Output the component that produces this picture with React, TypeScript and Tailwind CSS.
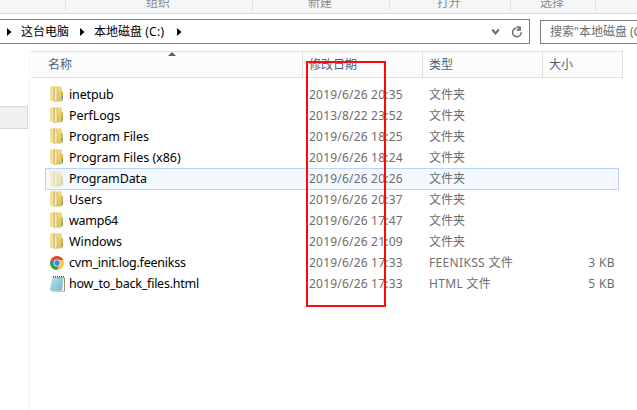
import React from "react";

type Entry = {
  name: string;
  date: string;
  type: string;
  size?: string;
  icon: "folder" | "chrome" | "note";
  active?: boolean;
  tracking: string;
};

const entries: Entry[] = [
  { name: "inetpub", date: "2019/6/26 20:35", type: "文件夹", icon: "folder", tracking: "tracking-[-0.15px]" },
  { name: "PerfLogs", date: "2013/8/22 23:52", type: "文件夹", icon: "folder", tracking: "tracking-[-0.1px]" },
  { name: "Program Files", date: "2019/6/26 18:25", type: "文件夹", icon: "folder", tracking: "tracking-[-0.05px]" },
  { name: "Program Files (x86)", date: "2019/6/26 18:24", type: "文件夹", icon: "folder", tracking: "tracking-[-0.03px]" },
  { name: "ProgramData", date: "2019/6/26 20:26", type: "文件夹", icon: "folder", active: true, tracking: "tracking-[-0.1px]" },
  { name: "Users", date: "2019/6/26 20:37", type: "文件夹", icon: "folder", tracking: "tracking-[-0.05px]" },
  { name: "wamp64", date: "2019/6/26 17:47", type: "文件夹", icon: "folder", tracking: "tracking-[-0.25px]" },
  { name: "Windows", date: "2019/6/26 21:09", type: "文件夹", icon: "folder", tracking: "tracking-[-0.05px]" },
  { name: "cvm_init.log.feenikss", date: "2019/6/26 17:33", type: "FEENIKSS 文件", size: "3 KB", icon: "chrome", tracking: "tracking-[-0.22px]" },
  { name: "how_to_back_files.html", date: "2019/6/26 17:33", type: "HTML 文件", size: "5 KB", icon: "note", tracking: "tracking-[-0.24px]" },
];

function FolderIcon({ faded }: { faded?: boolean }) {
  return (
    <svg width="16" height="18" viewBox="0 0 16 18" className={faded ? "mb-px opacity-45" : "mb-px"}>
      <defs>
        <linearGradient id="folderFront" x1="0" x2="1">
          <stop offset="0" stopColor="#f3e4a0" />
          <stop offset="0.5" stopColor="#eedd92" />
          <stop offset="1" stopColor="#d9bd5c" />
        </linearGradient>
        <linearGradient id="folderBack" x1="0" x2="0.4" y1="0" y2="1">
          <stop offset="0" stopColor="#f5e492" />
          <stop offset="1" stopColor="#e2c252" />
        </linearGradient>
      </defs>
      <path d="M6.500 1.200H12l.8 .8v13.800l-1 .7H6.500z" fill="url(#folderBack)" />
      <path d="M12 6l2 .6v8.600l-2 .9z" fill="#d9b640" />
      <path d="M13 11h1v3.500h-1z" fill="#5b9fb0" />
      <path d="M1 1.500L6 1v15.500L1 15.500z" fill="url(#folderFront)" />
      <path d="M5 3.200L8.300 2v13.600L5.500 17z" fill="#c5a551" />
      <path d="M5.800 3.400l1.900-.8v12.600l-1.900 1z" fill="#f7f0cf" />
    </svg>
  );
}

function ChromeIcon() {
  return (
    <svg width="16" height="18" viewBox="0 0 16 18">
      <circle cx="8" cy="9" r="7" fill="#fcc934" />
      <path d="M8 9L1.940 5.500A7 7 0 0 0 7.600 16L10.900 10.700z" fill="#27a15b" />
      <path d="M1.940 5.500A7 7 0 0 1 14.060 5.500L14.300 6H8L5 10.600z" fill="#dc4a3d" />
      <circle cx="8" cy="9" r="3.500" fill="#f4f6fa" />
      <circle cx="8" cy="9" r="2.700" fill="#3f82ee" />
    </svg>
  );
}

function NoteIcon() {
  return (
    <svg width="16" height="18" viewBox="0 0 16 18">
      <defs>
        <linearGradient id="notePaper" x1="0" x2="1" y1="0" y2="1">
          <stop offset="0" stopColor="#c3e5ee" />
          <stop offset="1" stopColor="#5caec2" />
        </linearGradient>
      </defs>
      <path d="M4 2.500h12v14H3z" fill="#a58e67" />
      <path d="M4 2.500h11v13.300H3z" fill="#fff" />
      <path d="M3.200 2h11.300l-1.500 13.500H.8z" fill="url(#notePaper)" />
      <path d="M3 5.500h10.500M2.800 7.500h10.500M2.500 9.500H13M2.200 11.500h10.500M2 13.500h10.500" stroke="#a5dae6" strokeWidth=".5" />
      <path d="M4 1.700h11" stroke="#444c50" strokeWidth="1.500" strokeDasharray="1 1" />
    </svg>
  );
}

const icons = { chrome: <ChromeIcon />, note: <NoteIcon /> };

function Crumb() {
  return (
    <svg width="5" height="8" viewBox="0 0 5 8" className="shrink-0">
      <path d="M0 0l4.500 4L0 8z" fill="#000" />
    </svg>
  );
}

const ribbon = [
  { label: "", box: "w-[66px]" },
  { label: "组织", box: "w-[187px] pl-[80px]" },
  { label: "新建", box: "w-[137px] pl-[55px]" },
  { label: "打开", box: "w-[121px] pl-[47px]" },
  { label: "选择", box: "w-[85px] pl-[29px]" },
];

export default function App() {
  return (
    <div className="flex h-[410px] w-[637px] flex-col overflow-hidden bg-white font-['Noto_Sans','Noto_Sans_CJK_SC',sans-serif] text-[12px] text-black">
      <div className="flex h-[14px] shrink-0 border-b border-[#d9dadb] bg-[#f5f6f7]">
        {ribbon.map((g) => (
          <div key={g.box} className={`flex h-[10px] shrink-0 border-r border-[#dfe0e1] text-[#8c8c8c] ${g.box}`}>
            <span className="-mt-[5px] h-[16px] leading-[16px]">{g.label}</span>
          </div>
        ))}
      </div>

      <div className="flex h-[37px] shrink-0 pt-[5px]">
        <div className="flex h-[25px] w-[530px] shrink-0 items-center border border-l-0 border-[#7c7c7c] pl-[7px]">
          <Crumb />
          <span className="ml-[9px] w-[59px]">这台电脑</span>
          <Crumb />
          <span className="ml-[9px] w-[83px] whitespace-nowrap">
            本地磁盘 <span className="tracking-[0.3px]">(C:)</span>
          </span>
          <Crumb />
          <svg width="9" height="8" viewBox="0 0 9 8" className="ml-[309px] shrink-0">
            <path d="M1.200 1.500L4.500 5.500 7.800 1.500" fill="none" stroke="#6c6c6c" strokeWidth="2" />
          </svg>
          <svg width="12" height="12" viewBox="0 0 12 12" className="ml-[11px] shrink-0">
            <path d="M5.500 2.100A4.300 4.300 0 1 0 10.200 6.300" fill="none" stroke="#757575" strokeWidth="1.600" />
            <path d="M5.200 0h1.500L10 .7v4H5.800V3.300L7.500 3z" fill="#757575" />
          </svg>
        </div>
        <div className="ml-[10px] mt-px flex h-[24px] w-[120px] shrink-0 items-center whitespace-nowrap border border-[#7c7c7c] pl-[9px] text-[#6d6d6d]">
          搜索"本地磁盘 (C:)"
        </div>
      </div>

      <div className="flex flex-1">
        <div className="w-[30px] shrink-0 border-r border-[#f3f4f5] pt-[55px]">
          <div className="h-[23px] w-[28px] border border-l-0 border-[#d9d9d9] bg-[#f0f0f0]" />
        </div>
        <div className="ml-px flex w-[592px] shrink-0 flex-col">
          <div className="relative flex h-[27px] shrink-0 items-center border-y border-r border-[#e0e0e0] bg-[#fcfcfc] text-[#4c607a]">
            <div className="flex h-full w-[272px] items-center border-r border-[#e0e0e0] pl-[17px]">名称</div>
            <div className="flex h-full w-[120px] items-center border-r border-[#e0e0e0] pl-[6px]">修改日期</div>
            <div className="flex h-full w-[120px] items-center border-r border-[#e0e0e0] pl-[6px]">类型</div>
            <div className="flex h-full items-center pl-[6px]">大小</div>
            <svg width="8" height="4" viewBox="0 0 8 4" className="absolute left-[137px] top-0">
              <path d="M4 0l4 4H0z" fill="#4c607a" />
            </svg>
          </div>
          <div className="ml-[14px] mt-[6px] flex w-[574px] flex-col">
            {entries.map((e) => (
              <div
                key={e.name}
                className={`flex items-center whitespace-nowrap border px-[3px] ${
                  e.active ? "z-10 -mb-px h-[22px] border-[#b8d6fb] bg-[#f3f8ff]" : "h-[21px] border-transparent"
                }`}
              >
                <div className="w-[20px] shrink-0">
                  {e.icon === "folder" ? <FolderIcon faded={e.active} /> : icons[e.icon]}
                </div>
                <span
                  className={`w-[240px] shrink-0 text-[12.5px] leading-[18px] ${e.active ? "" : "pt-[1.5px]"} ${e.tracking}`}
                >
                  {e.name}
                </span>
                <span className="w-[120px] shrink-0 text-[12px] tracking-[0.2px] text-[#6d6d6d]">{e.date}</span>
                <span className={`w-[120px] shrink-0 text-[#6d6d6d] ${e.size ? "tracking-[0.33px]" : ""}`}>{e.type}</span>
                <span className="flex-1 text-right tracking-[0.4px] text-[#6d6d6d]">{e.size}</span>
              </div>
            ))}
          </div>
        </div>
      </div>
      <div className="pointer-events-none absolute left-[306px] top-[61px] z-20 h-[246px] w-[80px] border-2 border-[#fb0a0a]" />
    </div>
  );
}
